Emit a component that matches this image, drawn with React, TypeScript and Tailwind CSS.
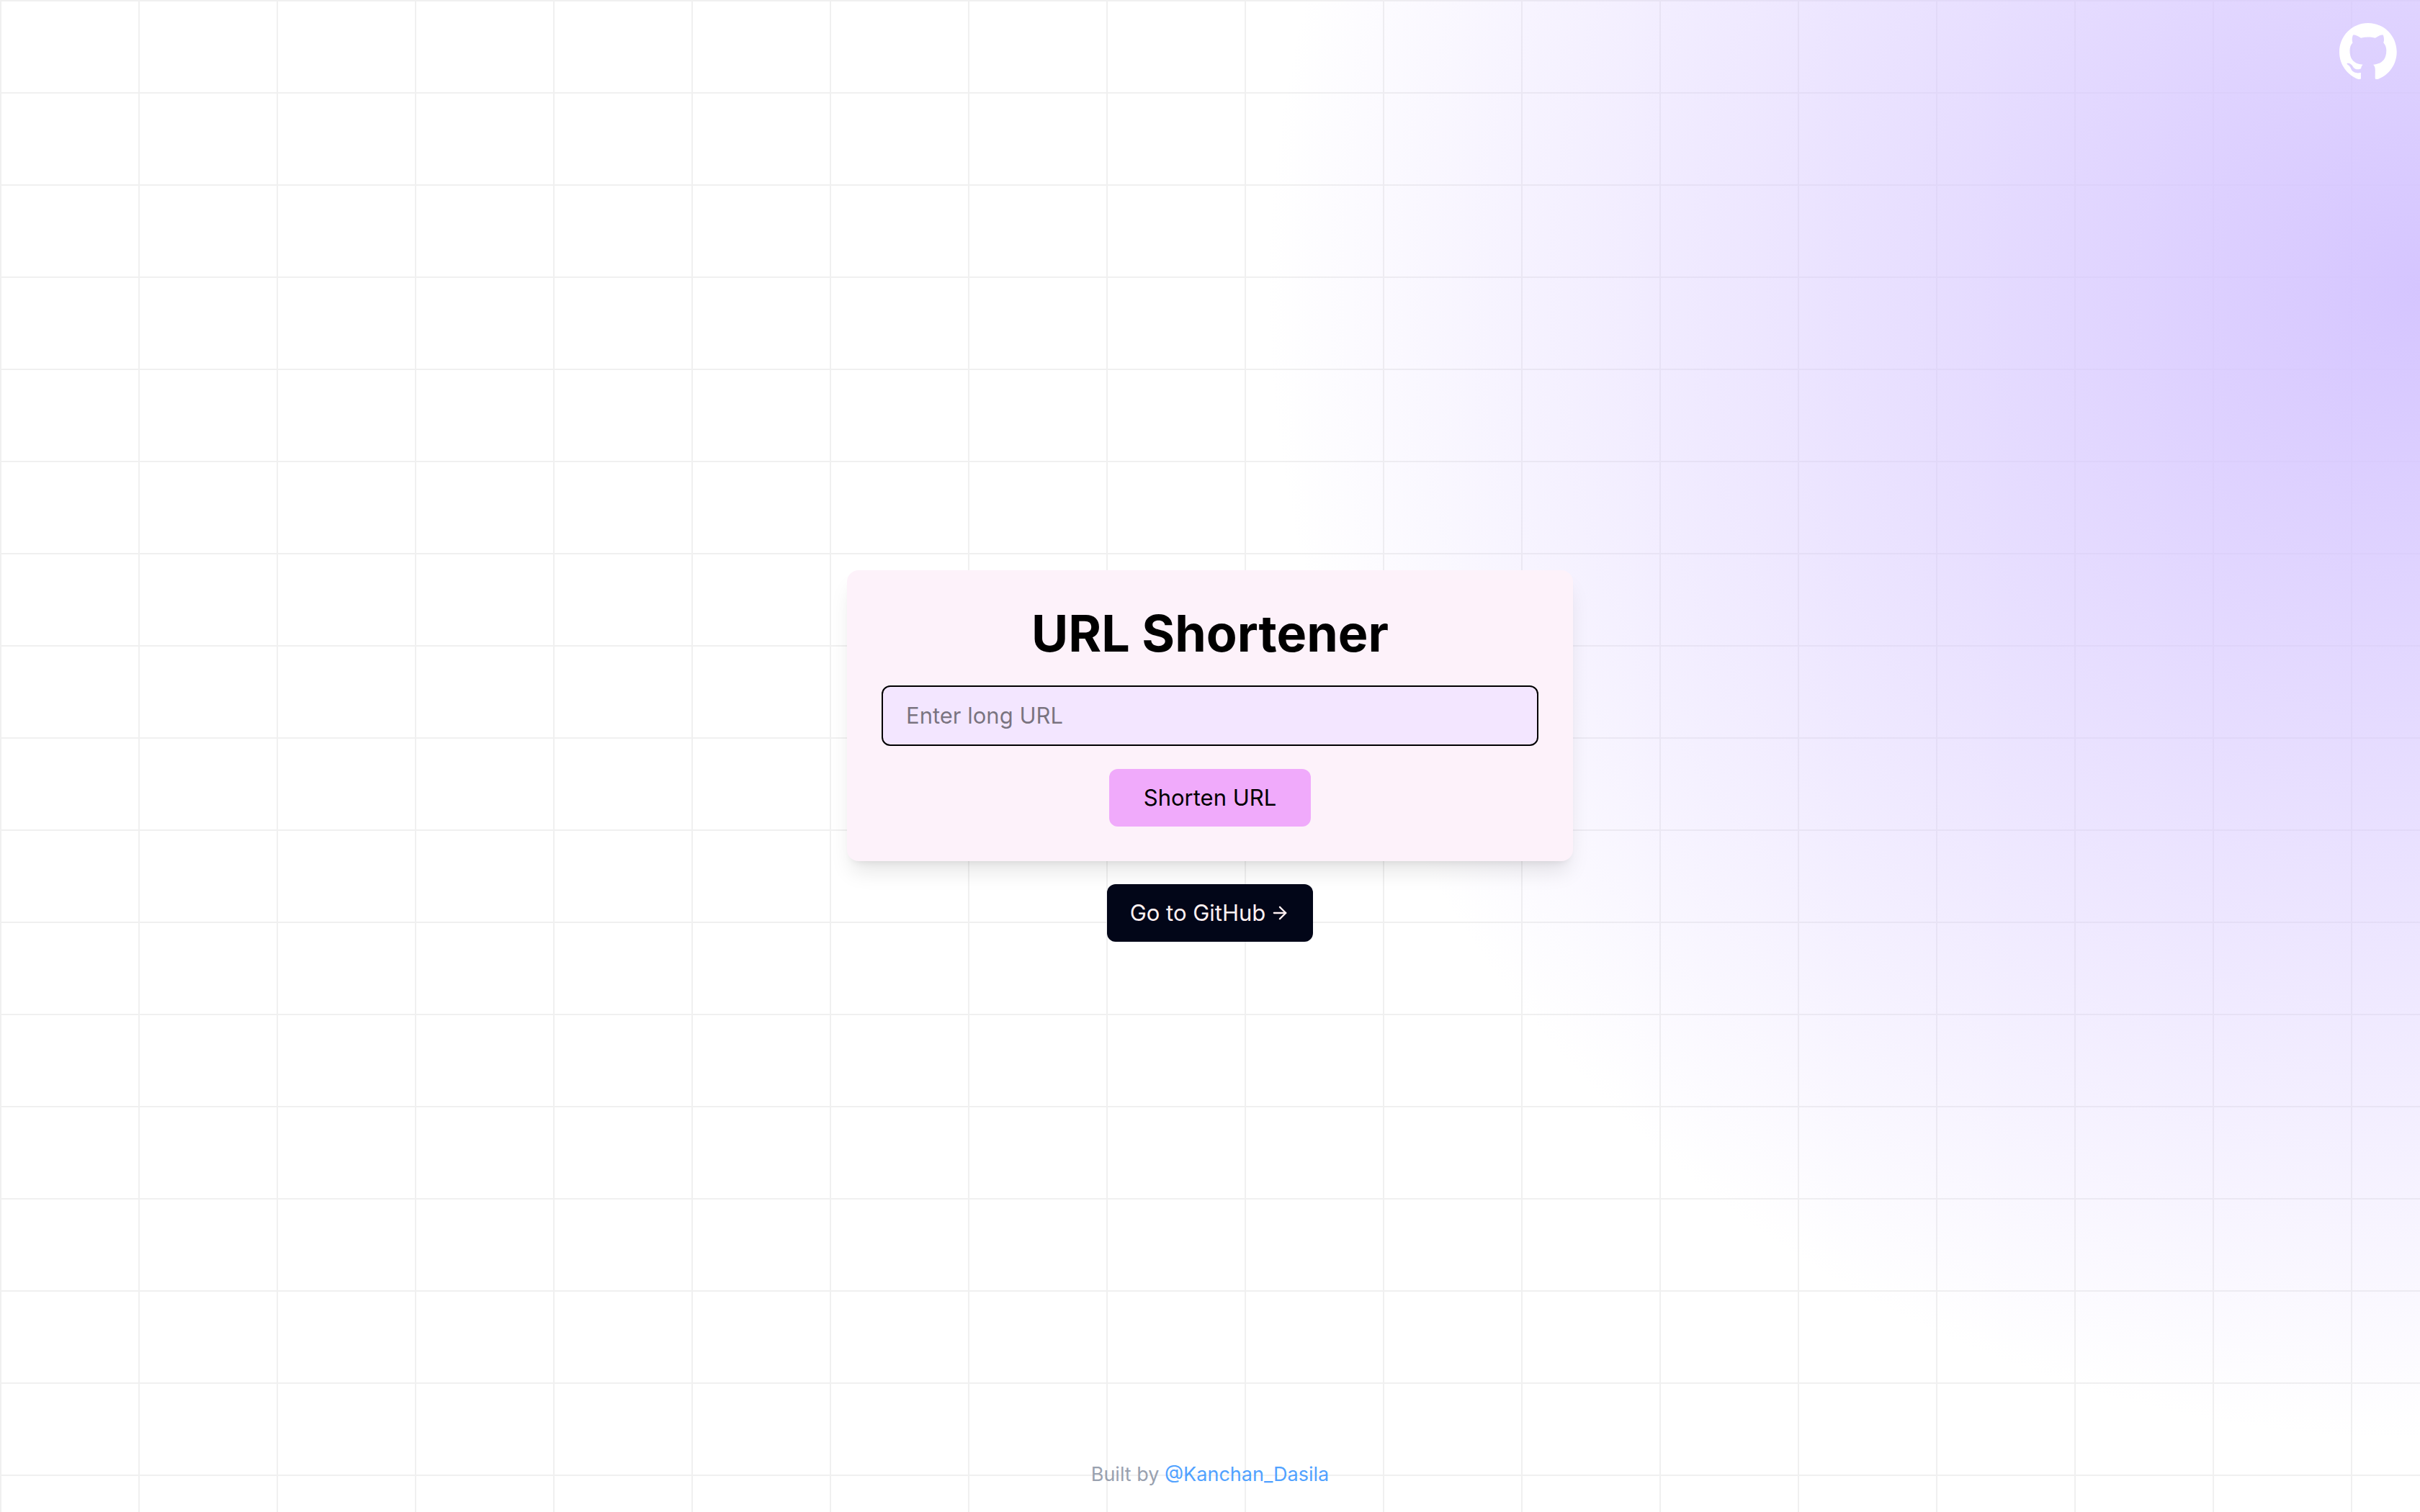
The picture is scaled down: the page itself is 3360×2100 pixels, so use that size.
import { ArrowRight } from "lucide-react";

function GithubMark() {
  return (
    <svg viewBox="0 0 98 96" className="w-20" fill="currentColor" aria-hidden="true">
      <path
        fillRule="evenodd"
        clipRule="evenodd"
        d="M48.854 0C21.839 0 0 22 0 49.217c0 21.756 13.993 40.172 33.405 46.69 2.427.49 3.316-1.059 3.316-2.362 0-1.141-.08-5.052-.08-9.127-13.59 2.934-16.42-5.867-16.42-5.867-2.184-5.704-5.42-7.17-5.42-7.17-4.448-3.015.324-3.015.324-3.015 4.934.326 7.523 5.052 7.523 5.052 4.367 7.496 11.404 5.378 14.235 4.074.404-3.178 1.699-5.378 3.074-6.6-10.839-1.141-22.243-5.378-22.243-24.283 0-5.378 1.94-9.778 5.014-13.2-.485-1.222-2.184-6.275.486-13.038 0 0 4.125-1.304 13.426 5.052a46.97 46.97 0 0 1 12.214-1.63c4.125 0 8.33.571 12.213 1.63 9.302-6.356 13.427-5.052 13.427-5.052 2.67 6.763.97 11.816.485 13.038 3.155 3.422 5.015 7.822 5.015 13.2 0 18.905-11.404 23.06-22.324 24.283 1.78 1.548 3.316 4.481 3.316 9.126 0 6.6-.08 11.897-.08 13.526 0 1.304.89 2.853 3.316 2.364 19.412-6.52 33.405-24.935 33.405-46.691C97.707 22 75.788 0 48.854 0z"
      />
    </svg>
  );
}

export default function App() {
  return (
    <div className="min-h-screen bg-white bg-[linear-gradient(to_right,#f0f0f0_2px,transparent_2px),linear-gradient(to_bottom,#f0f0f0_2px,transparent_2px)] bg-[size:192px_128px] font-['Inter',sans-serif] text-black">
      <div className="grid min-h-screen grid-rows-[1fr_auto_1fr] bg-[radial-gradient(circle_1600px_at_100%_400px,#d5c5ff,transparent)]">
        <header className="flex items-start justify-end p-8">
          <a href="#github" aria-label="GitHub" className="text-white">
            <GithubMark />
          </a>
        </header>

        <main className="flex flex-col items-center gap-8">
          <form className="flex w-[30%] flex-col items-center gap-8 rounded-2xl bg-[#fdf2fa] p-12 shadow-[0_20px_30px_-6px_rgb(0_0_0/0.1),0_8px_12px_-8px_rgb(0_0_0/0.1)]">
            <h1 className="text-[70px] leading-20 font-bold">URL Shortener</h1>
            <input
              type="url"
              aria-label="Long URL"
              placeholder="Enter long URL"
              className="w-full rounded-xl border-2 border-black bg-[#f3e6ff] px-8 py-4 text-[31px] leading-12 placeholder:text-black/50"
            />
            <button
              type="button"
              className="rounded-xl bg-[#f0aafb] px-12 py-4 text-[31px] leading-12"
            >
              Shorten URL
            </button>
          </form>
          <a
            href="#repository"
            className="flex items-center gap-1.5 rounded-xl bg-slate-950 px-8 py-4 text-[31px] leading-12 text-[#fff1f2]"
          >
            Go to GitHub
            <ArrowRight size={28} strokeWidth={2} aria-hidden="true" />
          </a>
        </main>

        <footer className="flex items-end justify-center p-8 text-[27px] leading-10 text-[#99a1af]">
          <p>
            Built by{" "}
            <a href="#author" className="text-[#51a2ff]">
              @Kanchan_Dasila
            </a>
          </p>
        </footer>
      </div>
    </div>
  );
}
